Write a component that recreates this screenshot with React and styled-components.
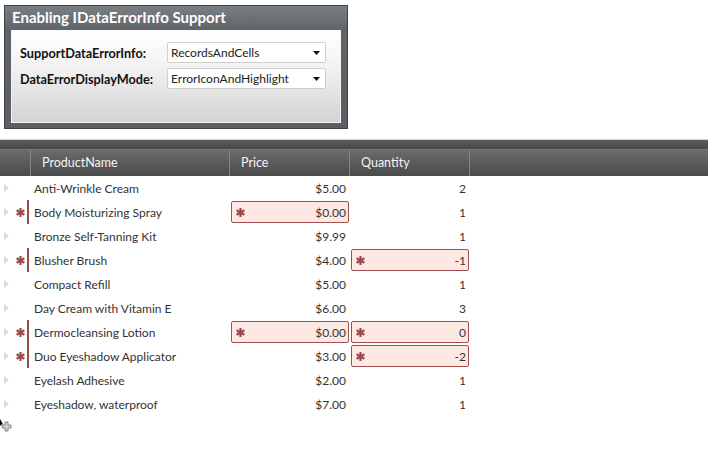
import React from "react";
import styled, { createGlobalStyle } from "styled-components";

const GlobalStyle = createGlobalStyle`
  html, body { margin: 0; padding: 0; background: #ffffff; }
  body { font-family: Lato, "Open Sans", sans-serif; font-size: 12px; color: #333; }
`;

const Page = styled.div`
  width: 708px;
  height: 452px;
  overflow: hidden;
  display: flex;
  flex-direction: column;
`;

const Panel = styled.div`
  margin: 5px 0 0 4px;
  width: 344px;
  height: 124px;
  box-sizing: border-box;
  border: 1px solid #3f4346;
  background: linear-gradient(to bottom, #7a7f83 0, #5f6468 24px, #5b5f63 100%);
  display: flex;
  flex-direction: column;
`;

const PanelTitle = styled.div`
  height: 24px;
  line-height: 22px;
  padding-left: 7px;
  font-weight: 700;
  font-size: 15px;
  color: #ffffff;
`;

const PanelBody = styled.div`
  flex: 1;
  margin: 0 6px 5px 6px;
  border: 1px solid #f6f6f6;
  background: linear-gradient(to bottom, #ffffff 0%, #f2f2f2 40%, #d3d3d3 100%);
  padding: 11px 0 0 8px;
  display: grid;
  grid-template-columns: 147px 159px;
  grid-auto-rows: 21px;
  row-gap: 5px;
  align-items: center;
`;

const Label = styled.div`
  font-weight: 700;
  font-size: 12.7px;
  color: #111;
`;

const Combo = styled.div`
  height: 21px;
  box-sizing: border-box;
  border: 1px solid #cfcfcf;
  border-radius: 2px;
  background: #fff;
  display: flex;
  align-items: center;
  justify-content: space-between;
  padding: 0 5px 0 3px;
  font-size: 12px;
  color: #222;
`;

const ComboArrow = () => (
  <svg width="7" height="4" viewBox="0 0 7 4">
    <path d="M0 0 L7 0 L3.5 4 Z" fill="#111" />
  </svg>
);

const GridArea = styled.div`
  margin-top: 10px;
  display: flex;
  flex-direction: column;
`;

const TopBand = styled.div`
  height: 9px;
  border-top: 1px solid #d2d2d2;
  border-bottom: 1px solid #7a7a7a;
  background: linear-gradient(to bottom, #5e5e5e, #474747);
`;

const cols = "30px 199px 120px 120px 1fr";

const HeaderRow = styled.div`
  display: grid;
  grid-template-columns: ${cols};
  height: 26px;
  background: linear-gradient(to bottom, #6b6b6b 0%, #5a5a5a 50%, #4b4b4b 100%);
`;

const HeaderCell = styled.div`
  border-left: ${(p) => (p.$first ? "none" : "1px solid #858585")};
  padding-left: ${(p) => (p.$first ? 0 : 11)}px;
  color: #f4f4f4;
  font-size: 12.5px;
  line-height: 25px;
`;

const Row = styled.div`
  display: grid;
  grid-template-columns: ${cols};
  height: 24px;
  align-items: center;
`;

const Indicator = styled.div`
  height: 24px;
  display: flex;
  align-items: center;
`;

const Tri = styled.svg`
  margin-left: 4px;
  flex: none;
`;

const StarWrap = styled.span`
  display: inline-flex;
  margin-left: ${(p) => p.$ml || 0}px;
  flex: none;
`;

const Bar = styled.div`
  width: 2px;
  height: 24px;
  margin-left: 2px;
  background: #9a4848;
`;

const NameCell = styled.div`
  padding-left: 4px;
  color: #333;
  white-space: nowrap;
  font-size: 12px;
`;

const NumCell = styled.div`
  text-align: right;
  padding-right: 3px;
  color: #333;
  font-size: 12px;
`;

const ErrorBox = styled.div`
  height: 22px;
  box-sizing: border-box;
  margin-left: 2px;
  border: 1px solid #a34f4f;
  border-radius: 2px;
  background: #fde8e4;
  display: flex;
  align-items: center;
  justify-content: space-between;
  padding: 0 2px 0 4px;
  color: #333;
  font-size: 12px;
`;

const Cursor = styled.svg`
  margin-top: 3px;
  display: block;
`;

const Star = ({ ml }) => (
  <StarWrap $ml={ml}>
    <svg width="9" height="9" viewBox="0 0 9 9">
      <g stroke="#9a4848" strokeWidth="2.2" strokeLinecap="butt">
        <line x1="4.5" y1="0" x2="4.5" y2="9" />
        <line x1="0.6" y1="2.3" x2="8.4" y2="6.7" />
        <line x1="0.6" y1="6.7" x2="8.4" y2="2.3" />
      </g>
    </svg>
  </StarWrap>
);

const rows = [
  { name: "Anti-Wrinkle Cream", price: "$5.00", qty: "2" },
  { name: "Body Moisturizing Spray", price: "$0.00", qty: "1", pe: true },
  { name: "Bronze Self-Tanning Kit", price: "$9.99", qty: "1" },
  { name: "Blusher Brush", price: "$4.00", qty: "-1", qe: true },
  { name: "Compact Refill", price: "$5.00", qty: "1" },
  { name: "Day Cream with Vitamin E", price: "$6.00", qty: "3" },
  { name: "Dermocleansing Lotion", price: "$0.00", qty: "0", pe: true, qe: true },
  { name: "Duo Eyeshadow Applicator", price: "$3.00", qty: "-2", qe: true },
  { name: "Eyelash Adhesive", price: "$2.00", qty: "1" },
  { name: "Eyeshadow, waterproof", price: "$7.00", qty: "1" },
];

const Value = ({ err, children }) =>
  err ? (
    <ErrorBox>
      <Star />
      <span>{children}</span>
    </ErrorBox>
  ) : (
    <NumCell>{children}</NumCell>
  );

export default function App() {
  return (
    <Page>
      <GlobalStyle />
      <Panel>
        <PanelTitle>Enabling IDataErrorInfo Support</PanelTitle>
        <PanelBody>
          <Label>SupportDataErrorInfo:</Label>
          <Combo>
            <span>RecordsAndCells</span>
            <ComboArrow />
          </Combo>
          <Label>DataErrorDisplayMode:</Label>
          <Combo>
            <span>ErrorIconAndHighlight</span>
            <ComboArrow />
          </Combo>
        </PanelBody>
      </Panel>
      <GridArea>
        <TopBand />
        <HeaderRow>
          <HeaderCell $first />
          <HeaderCell>ProductName</HeaderCell>
          <HeaderCell>Price</HeaderCell>
          <HeaderCell>Quantity</HeaderCell>
          <HeaderCell />
        </HeaderRow>
        {rows.map((r) => {
          const err = r.pe || r.qe;
          return (
            <Row key={r.name}>
              <Indicator>
                <Tri width="5" height="8" viewBox="0 0 5 8">
                  <path d="M0 0 L5 4 L0 8 Z" fill="#dcdcdc" />
                </Tri>
                {err && <Star ml={7} />}
                {err && <Bar />}
              </Indicator>
              <NameCell>{r.name}</NameCell>
              <Value err={r.pe}>{r.price}</Value>
              <Value err={r.qe}>{r.qty}</Value>
              <div />
            </Row>
          );
        })}
        <Cursor width="13" height="14" viewBox="0 0 13 14">
          <path d="M0 0 L0 7 L2 5 L4 7 Z" fill="#000" />
          <path d="M5 3 H8 V6 H11 V9 H8 V12 H5 V9 H2 V6 H5 Z" fill="#cfcfcf" stroke="#8a8a8a" strokeWidth="1" />
        </Cursor>
      </GridArea>
    </Page>
  );
}
